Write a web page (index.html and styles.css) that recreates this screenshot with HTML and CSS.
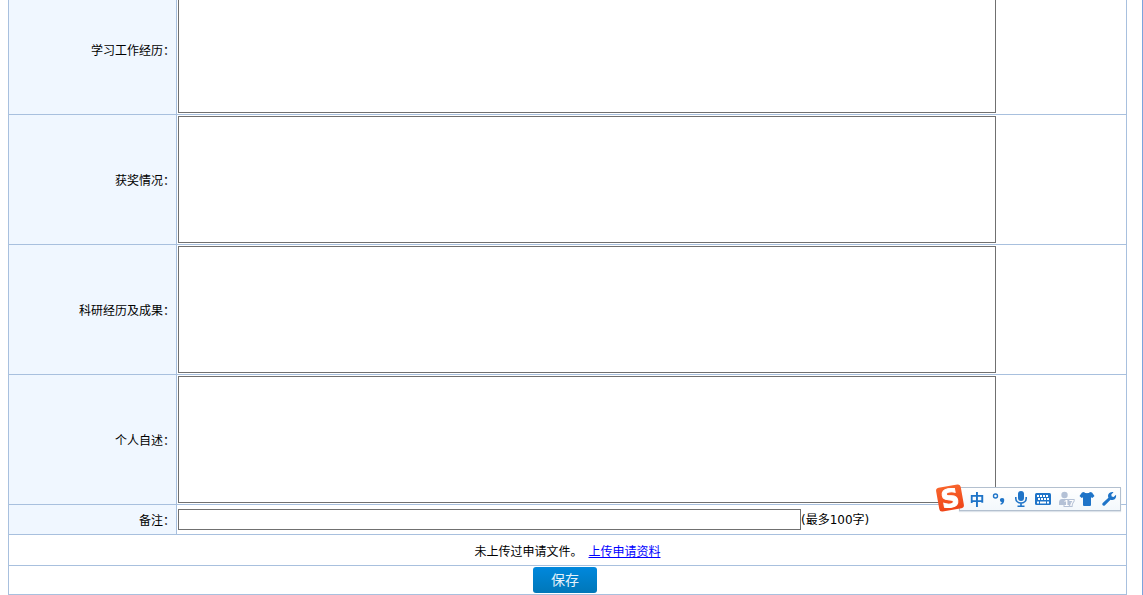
FILE: index.html
```
<!DOCTYPE html>
<html lang="zh-CN">
<head>
    <meta charset="UTF-8">
    <meta name="viewport" content="width=device-width, initial-scale=1.0">
    <title>申请信息</title>
    <link rel="stylesheet" href="styles.css">
</head>
<body>
    <form class="panel">
        <table class="form-table">
            <tr>
                <th class="label"><label for="study">学习工作经历：</label></th>
                <td><textarea id="study" name="study"></textarea></td>
            </tr>
            <tr>
                <th class="label"><label for="awards">获奖情况：</label></th>
                <td><textarea id="awards" name="awards"></textarea></td>
            </tr>
            <tr>
                <th class="label"><label for="research">科研经历及成果：</label></th>
                <td><textarea id="research" name="research"></textarea></td>
            </tr>
            <tr>
                <th class="label"><label for="statement">个人自述：</label></th>
                <td><textarea id="statement" name="statement"></textarea></td>
            </tr>
            <tr class="remark-row">
                <th class="label"><label for="remark">备注：</label></th>
                <td><div class="remark"><input type="text" id="remark" name="remark" maxlength="100"><span>(最多100字)</span></div></td>
            </tr>
            <tr class="upload-row">
                <td colspan="2">未上传过申请文件。<a class="upload-link" href="#">上传申请资料</a></td>
            </tr>
            <tr>
                <td colspan="2" class="actions"><button type="submit" class="save-button">保存</button></td>
            </tr>
        </table>
    </form>

    <!-- Input method bar -->
    <div class="ime">
        <svg class="ime-logo" viewBox="0 0 30 30">
            <defs>
                <linearGradient id="logoFill" x1="0" y1="0" x2="0" y2="1">
                    <stop offset="0" stop-color="#f8642c"/>
                    <stop offset="1" stop-color="#ef4519"/>
                </linearGradient>
            </defs>
            <g transform="rotate(-10 15 15)">
                <rect x="2.500" y="3" width="25" height="24" rx="3" fill="url(#logoFill)"/>
                <text class="logo-text" x="15" y="24" text-anchor="middle">S</text>
            </g>
        </svg>
        <div class="ime-bar">
            <button type="button" class="ime-button ime-lang">中</button>
            <button type="button" class="ime-button" aria-label="标点">
                <svg viewBox="0 0 16 16">
                    <circle cx="4.500" cy="5" r="2" fill="none" stroke="#1f74c8" stroke-width="1.400"/>
                    <path d="M11 7a2.200 2.200 0 0 1 2.200 2.400c0 2.200-1.300 3.700-3.400 4.400l-.5-1c1-.5 1.500-1 1.600-1.600a2.100 2.100 0 0 1-2-2.100c0-1.200.9-2.100 2.100-2.100z" fill="#1f74c8"/>
                </svg>
            </button>
            <button type="button" class="ime-button" aria-label="语音">
                <svg viewBox="0 0 16 16">
                    <rect x="5" y="0" width="6" height="10" rx="3" fill="#1f74c8"/>
                    <path d="M2.800 6v1.500a5.200 4.500 0 0 0 10.400 0V6M8 12v3M4.500 15.200h7" fill="none" stroke="#1f74c8" stroke-width="1.600"/>
                </svg>
            </button>
            <button type="button" class="ime-button" aria-label="键盘">
                <svg viewBox="0 0 16 16">
                    <rect x="0" y="2" width="16" height="12" rx="1.500" fill="#1f74c8"/>
                    <path d="M2 5h12M3 8h11" stroke="#fff" stroke-width="2" stroke-dasharray="2 1"/>
                    <path d="M2 11.500h2M5 11.500h6M12 11.500h2" stroke="#fff" stroke-width="2"/>
                </svg>
            </button>
            <button type="button" class="ime-button" aria-label="用户">
                <svg viewBox="0 0 16 16">
                    <circle cx="7.500" cy="4" r="3.200" fill="#b4c1d6"/>
                    <path d="M2 14v-2.500C2 9 3.500 8 5 8h5c2 0 3.500 1 3.500 3v3z" fill="#b4c1d6"/>
                    <text class="user-level" x="7" y="15">17</text>
                </svg>
            </button>
            <button type="button" class="ime-button" aria-label="皮肤">
                <svg viewBox="0 0 16 16">
                    <path d="M5 1c1 1.600 5 1.600 6 0l2 .5L15.500 5l-2.200 2-1.300-.8V14q0 1-1 1H5q-1 0-1-1V6.200L2.700 7 .5 5 3 1.500z" fill="#1f74c8"/>
                </svg>
            </button>
            <button type="button" class="ime-button" aria-label="工具">
                <svg viewBox="0 0 16 16">
                    <path d="M12.500 1.200 10.300 3.500l.4 2 2 .4 2.300-2.200c.6 2.400-.8 5.100-3.500 5.300-.8.100-1.400 0-2-.3L4 14.300c-1.500 1.500-3.800-.6-2.300-2.200l5.700-5.400C6 3.400 9 .200 12.500 1.200z" fill="#1f74c8"/>
                </svg>
            </button>
        </div>
    </div>
</body>
</html>
```
FILE: styles.css
```
* {
    box-sizing: border-box;
}

body {
    margin: 0;
    overflow: hidden;
    background-color: #fff;
    color: #000;
    font-family: "DejaVu Sans", "Noto Sans CJK SC", sans-serif;
    font-size: 12px;
    line-height: 16px;
}

.panel {
    display: flow-root;
    padding: 0 15px 0 8px;
    border-right: 1px solid #7ba3dc;
}

/* the first row starts above the fold */
.form-table {
    width: 100%;
    margin-top: -16px;
    border-collapse: collapse;
    table-layout: fixed;
}

.form-table th,
.form-table td {
    padding: 1px;
    border: 1px solid #a8c0de;
}

.form-table .label {
    width: 168px;
    padding-top: 3px;
    background-color: #f0f7ff;
    font-weight: normal;
    text-align: right;
}

.form-table td[colspan] {
    text-align: center;
}

textarea {
    display: block;
    width: 818px;
    max-width: 100%;
    height: 127px;
    margin: 0;
    border: 1px solid #707070;
    resize: none;
    outline: none;
}

.remark-row {
    height: 30px;
}

.remark {
    display: flex;
    align-items: center;
}

.remark input {
    width: 623px;
    height: 21px;
    padding: 1px;
    border: 1px solid #707070;
    outline: none;
}

.upload-row {
    height: 31px;
}

.form-table .upload-row td {
    padding-top: 4px;
}

.upload-link {
    margin-left: 6px;
    color: #0000ff;
}

.form-table .actions {
    padding-right: 6px;
}

.save-button {
    display: block;
    width: 64px;
    height: 26px;
    margin: 0 auto;
    padding: 0;
    border: none;
    border-radius: 3px;
    background: linear-gradient(#0088dd, #0077b8);
    color: #e6f3fb;
    font-family: inherit;
    font-size: 14px;
    line-height: 24px;
    cursor: pointer;
}

/* Input method bar */
.ime {
    position: fixed;
    top: 483px;
    right: 22px;
    display: flex;
    align-items: flex-end;
}

.ime-logo {
    z-index: 1;
    width: 30px;
    height: 30px;
    margin-right: -6px;
}

.logo-text {
    fill: #fff;
    stroke: #fff;
    stroke-width: 1px;
    font-size: 25px;
    font-weight: bold;
}

.ime-bar {
    display: flex;
    align-items: center;
    gap: 6px;
    height: 24px;
    margin-bottom: 2px;
    padding: 0 3px 0 9px;
    border: 1px solid #b3c0cf;
    background: linear-gradient(#fff, #f3f8fc);
    box-shadow: 0 1px 1px #dde3ea;
}

.ime-button {
    width: 16px;
    height: 16px;
    padding: 0;
    border: none;
    background: none;
    cursor: pointer;
}

.ime-button svg {
    display: block;
    overflow: visible;
}

.ime-lang {
    color: #1f74c8;
    font-family: "Noto Sans CJK SC", sans-serif;
    font-size: 15px;
    font-weight: bold;
    line-height: 14px;
}

.user-level {
    fill: #fff;
    stroke: #b4c1d6;
    stroke-width: 2px;
    paint-order: stroke;
    font-family: "Liberation Sans", sans-serif;
    font-size: 9px;
    font-weight: bold;
}
```
